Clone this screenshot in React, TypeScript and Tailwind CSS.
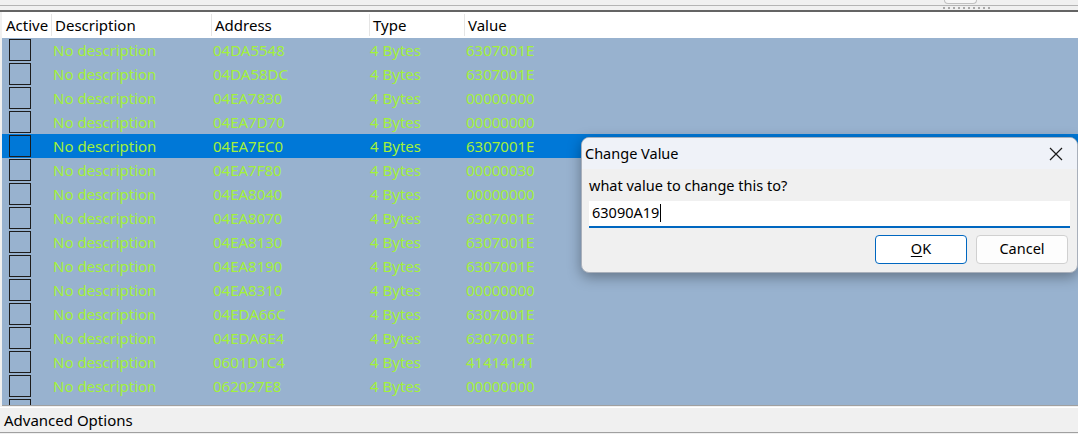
import React from "react"

const rows = [
  { addr: "04DA5548", value: "6307001E" },
  { addr: "04DA58DC", value: "6307001E" },
  { addr: "04EA7830", value: "00000000" },
  { addr: "04EA7D70", value: "00000000" },
  { addr: "04EA7EC0", value: "6307001E", selected: true },
  { addr: "04EA7F80", value: "00000030" },
  { addr: "04EA8040", value: "00000000" },
  { addr: "04EA8070", value: "6307001E" },
  { addr: "04EA8130", value: "6307001E" },
  { addr: "04EA8190", value: "6307001E" },
  { addr: "04EA8310", value: "00000000" },
  { addr: "04EDA66C", value: "6307001E" },
  { addr: "04EDA6E4", value: "6307001E" },
  { addr: "0601D1C4", value: "41414141" },
  { addr: "062027E8", value: "00000000" },
  { addr: "06202870", value: "00000000" },
]

function ChangeValueDialog() {
  return (
    <div className="absolute left-[581px] top-[137px] w-[497px] overflow-hidden rounded-[8px] border border-[#a9b0bb] bg-[#f0f0f0] shadow-[0_4px_14px_rgba(0,0,0,0.35)]">
      <div className="flex h-[31px] items-center justify-between bg-[#eff2f8] pl-[3px] pr-[14px]">
        <span className="text-[14.5px] text-black">Change Value</span>
        <svg width="14" height="14" viewBox="0 0 14 14" className="text-[#1a1a1a]">
          <path d="M1 1 L13 13 M13 1 L1 13" stroke="currentColor" strokeWidth="1.2" fill="none" />
        </svg>
      </div>
      <div className="px-[7px] pb-[8px] pt-[6px]">
        <div className="text-[14.5px] text-black">what value to change this to?</div>
        <div className="mt-[4px] flex h-[27px] items-center border-b-2 border-[#0067c0] bg-white pl-[3px] text-[14.5px] text-black">
          63090A19<span className="ml-[1px] inline-block h-[18px] w-px bg-black" />
        </div>
        <div className="mt-[7px] flex justify-end gap-[9px] pr-[2px]">
          <button className="h-[29px] w-[92px] rounded-[4px] border border-[#0067c0] bg-white text-[14.5px] text-black">
            <span className="underline underline-offset-2">O</span>K
          </button>
          <button className="h-[29px] w-[92px] rounded-[4px] border border-[#d0d0d0] bg-[#fdfdfd] text-[14.5px] text-black">
            Cancel
          </button>
        </div>
      </div>
    </div>
  )
}

export default function App() {
  return (
    <div className="relative h-[434px] w-[1078px] overflow-hidden bg-[#f0f0f0] font-['Noto_Sans',sans-serif]">
      {/* splitter strip */}
      <div className="relative h-[12px] border-b-2 border-[#646464] pt-[5px]">
        <div className="h-px bg-[#b4b4b4]" />
        <div className="absolute left-[944px] top-0 h-[4px] w-[33px] rounded-b-[4px] border border-t-0 border-[#c0c0c0] bg-[#f6f6f6]" />
        <div className="absolute left-[943px] top-[7px] flex gap-[3px]">
          {Array.from({ length: 10 }).map((_, i) => (
            <div key={i} className="h-[2px] w-[2px] bg-[#a8a8a8]" />
          ))}
        </div>
      </div>

      <div className="ml-[2px] flex h-[394px] flex-col border-b border-[#a0a0a0] bg-[#98b2cf]">
        <div className="flex h-[26px] shrink-0 items-center bg-white text-[15px] text-black">
          <div className="w-[50px] border-r border-[#e5e5e5] pl-[4px]">Active</div>
          <div className="w-[160px] border-r border-[#e5e5e5] pl-[3px]">Description</div>
          <div className="w-[158px] border-r border-[#e5e5e5] pl-[3px]">Address</div>
          <div className="w-[95px] border-r border-[#e5e5e5] pl-[3px]">Type</div>
          <div className="pl-[3px]">Value</div>
        </div>
        <div className="flex flex-col overflow-hidden text-[15px] text-[#a3f13a]">
          {rows.map((r) => (
            <div
              key={r.addr}
              className={`flex h-[24px] shrink-0 items-center ${r.selected ? "bg-[#0078d7]" : ""}`}
            >
              <div className="w-[51px] pl-[7px]">
                <div className="h-[22px] w-[22px] border border-[#1c1c1c]" />
              </div>
              <div className="w-[160px]">No description</div>
              <div className="w-[157px]">{r.addr}</div>
              <div className="w-[96px]">4 Bytes</div>
              <div>{r.value}</div>
            </div>
          ))}
        </div>
      </div>

      <div className="mt-[1px] flex h-[26px] items-center border-t border-white border-b border-b-[#a0a0a0] pl-[4px] text-[15px] text-black">
        Advanced Options
      </div>

      <ChangeValueDialog />
    </div>
  )
}
